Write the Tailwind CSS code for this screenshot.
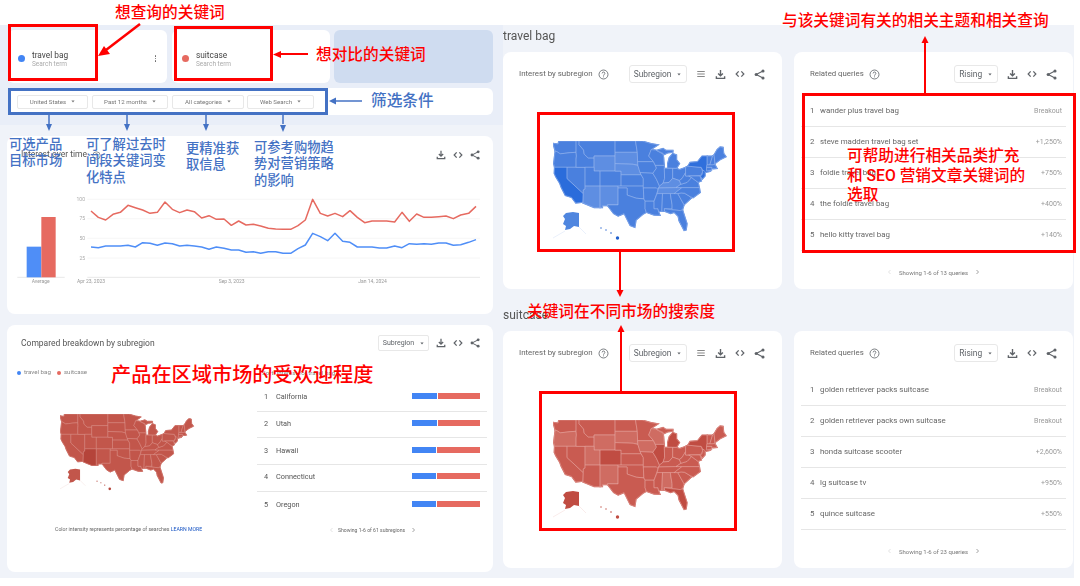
<!DOCTYPE html>
<html lang="zh-CN">
<head>
  <meta charset="UTF-8">
  <title>Google Trends 关键词对比</title>
  <script src="https://cdn.jsdelivr.net/npm/@tailwindcss/browser@4"></script>
</head>
<body class="bg-white font-['Roboto','Noto_Sans_CJK_SC',sans-serif]">

<!-- shared icons -->
<svg class="hidden">
  <symbol id="i-down" viewBox="0 0 12 12"><path d="M6 1v6M3.4 4.8 6 7.4l2.6-2.6M1.5 8v2.2h9V8" fill="none" stroke="currentColor" stroke-width="1.5"/></symbol>
  <symbol id="i-code" viewBox="0 0 12 12"><path d="M4.4 2.8 1.4 6l3 3.2M7.6 2.8l3 3.2-3 3.2" fill="none" stroke="currentColor" stroke-width="1.5"/></symbol>
  <symbol id="i-share" viewBox="0 0 12 12"><path d="M9.8 2.2 2.4 6l7.4 3.8" fill="none" stroke="currentColor" stroke-width="1.2"/><circle cx="9.8" cy="2.2" r="1.7" fill="currentColor"/><circle cx="2.4" cy="6" r="1.7" fill="currentColor"/><circle cx="9.8" cy="9.8" r="1.7" fill="currentColor"/></symbol>
  <symbol id="i-list" viewBox="0 0 12 12"><path d="M1.5 3h9M1.5 6h9M1.5 9h9" fill="none" stroke="currentColor" stroke-width="1.3"/></symbol>
  <symbol id="i-help" viewBox="0 0 12 12"><circle cx="6" cy="6" r="4.9" fill="none" stroke="currentColor" stroke-width=".9"/><path d="M4.5 4.8c0-2 3-2 3 0 0 1.200-1.500 1.200-1.500 2.500M6 8.100v1" fill="none" stroke="currentColor" stroke-width=".9"/></symbol>
  <symbol id="i-caret" viewBox="0 0 6 4"><path d="M.6.6h4.800L3 3.400z" fill="currentColor"/></symbol>
  <symbol id="i-left" viewBox="0 0 6 10"><path d="M5 1 1 5l4 4" fill="none" stroke="currentColor" stroke-width="1.100"/></symbol>
  <symbol id="i-right" viewBox="0 0 6 10"><path d="m1 1 4 4-4 4" fill="none" stroke="currentColor" stroke-width="1.100"/></symbol>
</svg>

<div class="relative w-[1080px] h-[586px] overflow-hidden bg-white">

  <!-- trends page -->
  <div class="mt-[25px] w-[1074px] h-[553px] bg-[#f0f3f9] flex blur-[0.45px] absolute top-0 left-0">

    <!-- left column -->
    <div class="w-[503px] shrink-0">
      <div class="h-[100px] bg-[#e9eef8] pt-[5px] pl-[8px]">
        <div class="flex h-[53px]">
          <div class="w-[159px] bg-white rounded-[6px] flex items-center pl-[10px] pr-[11px] pt-[4px]">
            <span class="w-[7px] h-[7px] rounded-full bg-[#4285f4]"></span>
            <div class="ml-[7px] flex-1">
              <div class="text-[8.300px] leading-[10px] text-[#444]">travel bag</div>
              <div class="text-[6.500px] leading-[8px] text-[#aaa]">Search term</div>
            </div>
            <span class="flex flex-col gap-[1px]">
              <i class="w-[1.500px] h-[1.500px] bg-[#666] rounded-full"></i><i class="w-[1.500px] h-[1.500px] bg-[#666] rounded-full"></i><i class="w-[1.500px] h-[1.500px] bg-[#666] rounded-full"></i>
            </span>
          </div>
          <div class="w-[158px] ml-[5px] bg-white rounded-[6px] flex items-center pl-[10px] pt-[4px]">
            <span class="w-[7px] h-[7px] rounded-full bg-[#e66a60]"></span>
            <div class="ml-[7px]">
              <div class="text-[8.300px] leading-[10px] text-[#444]">suitcase</div>
              <div class="text-[6.500px] leading-[8px] text-[#aaa]">Search term</div>
            </div>
          </div>
          <div class="w-[159px] ml-[4px] bg-[#cfdcf0] rounded-[6px]"></div>
        </div>
        <div class="mt-[5px] h-[27px] w-[485px] bg-white rounded-[6px] flex items-center pl-[9px] text-[6.100px] text-[#777]">
          <div class="w-[71px] h-[14px] border border-[#e8e8e8] rounded-[2px] flex items-center justify-center gap-[5px]">United States <svg class="w-[4px] h-[3px]"><use href="#i-caret"/></svg></div>
          <div class="w-[76px] h-[14px] ml-[4px] border border-[#e8e8e8] rounded-[2px] flex items-center justify-center gap-[5px]">Past 12 months <svg class="w-[4px] h-[3px]"><use href="#i-caret"/></svg></div>
          <div class="w-[72px] h-[14px] ml-[4px] border border-[#e8e8e8] rounded-[2px] flex items-center justify-center gap-[5px]">All categories <svg class="w-[4px] h-[3px]"><use href="#i-caret"/></svg></div>
          <div class="w-[67px] h-[14px] ml-[3px] border border-[#e8e8e8] rounded-[2px] flex items-center justify-center gap-[5px]">Web Search <svg class="w-[4px] h-[3px]"><use href="#i-caret"/></svg></div>
        </div>
      </div>

      <!-- interest over time -->
      <div class="ml-[7px] mt-[11px] w-[486px] h-[178px] bg-white rounded-[8px]">
        <div class="h-[37px] flex items-center pl-[14px] pr-[13px] text-[#5f6368]">
          <span class="text-[8.500px] text-[#555]">Interest over time</span>
          <svg class="w-[9px] h-[9px] ml-[5px] mt-[1px]"><use href="#i-help"/></svg>
          <span class="flex-1"></span>
          <svg class="w-[10px] h-[10px]"><use href="#i-down"/></svg>
          <svg class="w-[10px] h-[10px] ml-[7px]"><use href="#i-code"/></svg>
          <svg class="w-[10px] h-[10px] ml-[7px]"><use href="#i-share"/></svg>
        </div>
        <svg class="block mt-[3px] w-[486px] h-[138px]" viewBox="21 138 1458 414">
          <g stroke="#f1f1f1" stroke-width="2"><path d="M262 208H1440M262 266H1440M262 325H1440M262 384H1440"/></g>
          <path d="M262 442H1440M52 442H194" stroke="#dcdcdc" stroke-width="2"/>
          <rect x="80" y="350" width="44" height="92" fill="#4f8ef7"/>
          <rect x="124" y="261" width="43" height="181" fill="#e66a60"/>
          <g fill="#aaa" font-size="15" text-anchor="end">
            <text x="255" y="213">100</text><text x="255" y="271">75</text><text x="255" y="330">50</text><text x="255" y="389">25</text>
          </g>
          <g fill="#999" font-size="15">
            <text x="231" y="459">Apr 23, 2023</text><text x="656" y="459">Sep 3, 2023</text><text x="1075" y="459">Jan 14, 2024</text><text x="95" y="459">Average</text>
          </g>
          <polyline fill="none" stroke="#e66a60" stroke-width="4.500" stroke-linejoin="round" points="273,243 295,262 317,270 339,253 361,247 384,226 406,233 428,240 450,250 472,247 495,216 517,238 539,248 561,240 583,245 605,264 627,257 649,268 672,267 694,286 716,273 738,285 760,283 782,288 805,295 827,297 849,298 872,298 894,287 916,270 938,208 961,250 983,258 1005,250 1028,260 1050,242 1072,262 1094,278 1116,273 1138,273 1160,273 1184,276 1206,247 1228,274 1250,252 1272,262 1294,262 1316,260 1338,258 1360,266 1382,255 1406,250 1428,229"/>
          <polyline fill="none" stroke="#4f8ef7" stroke-width="4.500" stroke-linejoin="round" points="273,351 295,353 317,348 339,348 361,348 384,346 406,351 428,338 450,340 472,346 495,339 517,341 539,348 561,346 583,348 605,351 627,358 649,351 672,355 694,360 716,360 738,367 760,365 782,370 805,365 827,365 849,370 872,370 894,356 916,345 938,310 961,320 983,332 1005,310 1028,334 1050,337 1072,351 1094,351 1116,351 1138,354 1160,354 1184,348 1206,353 1228,341 1250,343 1272,341 1294,343 1316,339 1338,339 1360,346 1382,344 1406,337 1428,329"/>
        </svg>
      </div>

      <!-- compared breakdown -->
      <div class="ml-[7px] mt-[11px] w-[486px] h-[247px] bg-white rounded-[8px] pt-[10px]">
        <div class="h-[16px] flex items-center pl-[14px] pr-[13px] text-[#5f6368]">
          <span class="text-[8.500px] text-[#555]">Compared breakdown by subregion</span>
          <span class="flex-1"></span>
          <div class="w-[51px] h-[16px] border border-[#e8e8e8] rounded-[2px] flex items-center justify-center gap-[6px] text-[7px]">Subregion <svg class="w-[4px] h-[3px]"><use href="#i-caret"/></svg></div>
          <svg class="w-[10px] h-[10px] ml-[7px]"><use href="#i-down"/></svg>
          <svg class="w-[10px] h-[10px] ml-[7px]"><use href="#i-code"/></svg>
          <svg class="w-[10px] h-[10px] ml-[7px]"><use href="#i-share"/></svg>
        </div>
        <div class="flex mt-[18px]">
          <div class="w-[250px]">
            <div class="h-[8px] pl-[10px] flex items-center text-[6.200px] text-[#888]">
              <span class="w-[4px] h-[4px] rounded-full bg-[#4285f4]"></span><span class="ml-[3px]">travel bag</span>
              <span class="w-[4px] h-[4px] rounded-full bg-[#e66a60] ml-[6px]"></span><span class="ml-[3px]">suitcase</span>
            </div>
            <svg id="map-compare" class="block ml-[53px] mt-[37px] w-[135px] h-[78px]" viewBox="0 0 175 101"></svg>
            <div class="mt-[33px] pl-[48px] h-[8px] text-[5.200px] leading-[8px] text-[#666] whitespace-nowrap">Color intensity represents percentage of searches <span class="text-[#1a56c4]">LEARN MORE</span></div>
          </div>
          <div class="w-[230px]">
            <div class="h-[8px] pl-[5px] text-[6.200px] leading-[8px] text-[#888]">Sort: Interest for travel bag</div>
            <div id="compare-rows" class="mt-[8px]"></div>
            <div class="mt-[7px] h-[10px] flex items-center pl-[73px] text-[5.100px] text-[#666]">
              <svg class="w-[3px] h-[6px] text-[#ccc]"><use href="#i-left"/></svg>
              <span class="ml-[5px]">Showing 1-6 of 61 subregions</span>
              <svg class="w-[3px] h-[6px] ml-[7px] text-[#555]"><use href="#i-right"/></svg>
            </div>
          </div>
        </div>
      </div>
    </div>

    <!-- right column -->
    <div class="w-[570px] grid grid-cols-[279px_279px] gap-x-[12px] content-start">
      <div class="col-span-2 h-[27px] flex items-end pb-[9px] text-[12px] leading-[14px] text-[#555]">travel bag</div>
      <div class="h-[237px] bg-white rounded-[8px]" data-region="map-blue"></div>
      <div class="h-[237px] bg-white rounded-[8px]" data-related="top"></div>
      <div class="col-span-2 h-[42px] flex items-end pb-[9px] text-[12px] leading-[14px] text-[#555]">suitcase</div>
      <div class="h-[237px] bg-white rounded-[8px]" data-region="map-red"></div>
      <div class="h-[237px] bg-white rounded-[8px]" data-related="bottom"></div>
    </div>
  </div>

  <!-- annotation frames and arrows -->
  <div class="absolute left-[8px] top-[24px] w-[90px] h-[57px] border-[3px] border-[#ff0000]"></div>
  <div class="absolute left-[174px] top-[26px] w-[99px] h-[55px] border-[3px] border-[#ff0000]"></div>
  <div class="absolute left-[8px] top-[88px] w-[320px] h-[27px] border-[3px] border-[#4472c4]"></div>
  <div class="absolute left-[537px] top-[112px] w-[198px] h-[140px] border-[3px] border-[#ff0000]"></div>
  <div class="absolute left-[539px] top-[391px] w-[198px] h-[140px] border-[3px] border-[#ff0000]"></div>
  <div class="absolute left-[802px] top-[93px] w-[274px] h-[160px] border-[3px] border-[#ff0000]"></div>

  <svg class="absolute left-0 top-0 w-[1080px] h-[586px]" viewBox="0 0 1080 586">
    <g stroke="#ff0000" stroke-width="2" fill="none">
      <path d="M140 24 106 50" stroke-width="2.500"/><path d="M308 54H280"/><path d="M620 252v38"/><path d="M621 391v-60"/><path d="M925 93V42"/>
    </g>
    <g fill="#ff0000">
      <path d="M98 56l12-2-6-8z"/><path d="M273 54.500l8-3.500v7z"/><path d="M620 297l-3.500-7h7z"/><path d="M621 325l-3.500 7h7z"/><path d="M925 36l-3.500 7h7z"/>
    </g>
    <g stroke="#4472c4" stroke-width="1.500" fill="none">
      <path d="M362 101H335"/><path d="M49 115v9"/><path d="M127 115v9"/><path d="M206 115v9"/><path d="M283 115v9"/>
    </g>
    <g fill="#4472c4">
      <path d="M329 101l7-3.500v7z"/><path d="M49 131l-3-7h6z"/><path d="M127 131l-3-7h6z"/><path d="M206 131l-3-7h6z"/><path d="M283 132l-3-7h6z"/>
    </g>
  </svg>

  <!-- annotation texts -->
  <div class="absolute left-[115px] top-[3px] text-[15.700px] leading-[20px] text-[#ff0000] font-medium whitespace-nowrap">想查询的关键词</div>
  <div class="absolute left-[316px] top-[45px] text-[15.700px] leading-[20px] text-[#ff0000] font-medium whitespace-nowrap">想对比的关键词</div>
  <div class="absolute left-[782px] top-[11px] text-[15.700px] leading-[20px] text-[#ff0000] font-medium whitespace-nowrap">与该关键词有关的相关主题和相关查询</div>
  <div class="absolute left-[527px] top-[302px] text-[15.700px] leading-[20px] text-[#ff0000] font-medium whitespace-nowrap">关键词在不同市场的搜索度</div>
  <div class="absolute left-[111px] top-[362px] text-[20.200px] leading-[26px] text-[#ff0000] font-medium whitespace-nowrap">产品在区域市场的受欢迎程度</div>
  <div class="absolute left-[847px] top-[146px] text-[15.700px] leading-[19.500px] text-[#ff0000] font-medium whitespace-nowrap">可帮助进行相关品类扩充<br>和 SEO 营销文章关键词的<br>选取</div>
  <div class="absolute left-[371px] top-[91px] text-[15.700px] leading-[20px] text-[#4472c4] font-medium whitespace-nowrap">筛选条件</div>
  <div class="absolute left-[9px] top-[137px] text-[13.300px] leading-[16.300px] text-[#4472c4] font-medium whitespace-nowrap">可选产品<br>目标市场</div>
  <div class="absolute left-[86px] top-[137px] text-[13.300px] leading-[16.300px] text-[#4472c4] font-medium whitespace-nowrap">可了解过去时<br>间段关键词变<br>化特点</div>
  <div class="absolute left-[186px] top-[141px] text-[13.300px] leading-[16.300px] text-[#4472c4] font-medium whitespace-nowrap">更精准获<br>取信息</div>
  <div class="absolute left-[254px] top-[140px] text-[13.300px] leading-[16.300px] text-[#4472c4] font-medium whitespace-nowrap">可参考购物趋<br>势对营销策略<br>的影响</div>
</div>

<script>
  // state outlines as lon/lat, flat projection like the flat top border of the picture
  const states = {
    WA: [-124.7,48.4,-123,48.2,-122.8,49,-117,49,-117,46,-119,45.9,-121,45.7,-122.3,45.6,-123.5,46.2,-124,46.3],
    OR: [-124,46.3,-123.5,46.2,-122.3,45.6,-121,45.7,-119,45.9,-117,46,-116.9,45,-117,44.2,-117,42,-124.2,42,-124.5,43],
    CA: [-124.2,42,-120,42,-120,39,-114.6,35,-114.7,32.7,-117.1,32.5,-118.5,34,-120.6,34.5,-122,36.7,-122.5,37.8,-123.8,39.5,-124.3,40.4],
    NV: [-120,42,-114,42,-114,36.2,-114.6,36,-114.6,35,-120,39],
    ID: [-117,49,-116,49,-116,48,-114.5,46.6,-114.3,45.5,-113,44.5,-111,44.5,-111,42,-117,42,-117,44.2,-116.9,45,-117,46],
    MT: [-116,49,-104,49,-104,45,-111,45,-111,44.5,-113,44.5,-114.3,45.5,-114.5,46.6,-116,48],
    WY: [-111,45,-104,45,-104,41,-111,41],
    UT: [-114,42,-111,42,-111,41,-109,41,-109,37,-114,37],
    CO: [-109,41,-102,41,-102,37,-109,37],
    AZ: [-114,37,-109,37,-109,31.3,-111,31.3,-114.8,32.5,-114.7,32.7,-114.6,35,-114.6,36,-114,36.2],
    NM: [-109,37,-103,37,-103,32,-106.6,32,-106.5,31.8,-108.2,31.8,-108.2,31.3,-109,31.3],
    ND: [-104,49,-97.2,49,-96.6,46,-104,46],
    SD: [-104,46,-96.6,46,-96.5,43.5,-96.4,42.5,-98,42.8,-104,43],
    NE: [-104,43,-98,42.8,-96.4,42.5,-95.3,40,-102,40,-102,41,-104,41],
    KS: [-102,40,-95.3,40,-94.6,39,-94.6,37,-102,37],
    OK: [-103,37,-94.6,37,-94.4,33.6,-97,33.8,-100,34.6,-100,36.5,-103,36.5],
    TX: [-103,36.5,-100,36.5,-100,34.6,-97,33.8,-94.4,33.6,-94,33,-94,31,-93.6,30,-94.7,29.5,-97,28,-97.4,26,-99,26.5,-101,29.7,-103,29,-104.5,29.7,-106.5,31.8,-106.6,32,-103,32],
    MN: [-97.2,49,-95,49,-92,48.3,-89.6,48,-92,46.7,-92.3,46,-92.8,45,-91.2,43.5,-96.5,43.5,-96.6,46],
    IA: [-96.5,43.5,-91.2,43.5,-90.2,41.8,-91.4,40.4,-95.7,40.6,-96.4,42.5],
    MO: [-95.7,40.6,-91.4,40.4,-90.2,38.8,-89.2,37,-89.7,36,-90.4,36.5,-94.6,36.5,-94.6,39,-95.3,40],
    AR: [-94.6,36.5,-90,36.5,-89.7,36,-91,33,-94,33,-94.4,33.6],
    LA: [-94,33,-91,33,-91,31,-89.7,31,-89.5,30.2,-89,29.2,-91,29.3,-93.6,30,-94,31],
    WI: [-92,46.7,-90.5,46.6,-88,45.5,-87.8,44.5,-87.6,42.5,-90.6,42.5,-91.2,43.5,-92.8,45,-92.3,46],
    IL: [-90.6,42.5,-87.6,42.5,-87.5,39,-88,37.8,-89.2,37,-90.2,38.8,-91.4,40.4,-90.2,41.8],
    MI: [-86.5,41.8,-83.5,41.7,-82.5,43,-83.5,44,-83.5,45.3,-84.8,45.7,-86,44.5,-86.5,43],
    MIU: [-90.2,46.5,-88,47,-87,46.5,-84.7,46.5,-84.7,46,-86.5,45.8,-87.8,45.3,-88,45.7],
    IN: [-87.6,41.7,-84.8,41.7,-84.8,39.1,-86,38,-88,37.8,-87.5,39],
    OH: [-84.8,41.7,-83.5,41.7,-82.5,41.4,-80.5,42,-80.5,40.6,-81.7,39,-82.6,38.5,-84.8,39.1],
    KY: [-89.5,36.5,-83.7,36.6,-82,37.5,-82.6,38.5,-84.8,39.1,-86,38,-88,37.8,-89.2,37],
    TN: [-90,35,-84.3,35,-81.7,36.6,-83.7,36.6,-89.5,36.5],
    MS: [-91,33,-90,35,-88.2,35,-88.4,30.3,-89.5,30.2,-89.7,31,-91,31],
    AL: [-88.2,35,-85.6,35,-85,32,-85,31,-87.6,31,-87.5,30.3,-88.4,30.3],
    GA: [-85.6,35,-83.1,35,-81,32,-81.5,30.7,-82.2,30.5,-85,30.7,-85,32],
    FL: [-87.6,31,-85,30.7,-82.2,30.5,-81.5,30.7,-80,27,-80.3,25.3,-81,25.2,-82.7,27.8,-83,29,-84.3,30,-85.5,29.7,-87.5,30.3],
    SC: [-83.1,35,-82,35.2,-80.8,35.1,-79,34.2,-78.6,33.8,-81,32],
    NC: [-84.3,35,-83.1,35,-82,35.2,-80.8,35.1,-79,34.2,-78,33.9,-75.6,35.3,-75.9,36.6,-81.7,36.6],
    VA: [-83.7,36.6,-75.9,36.6,-76.3,38,-77.2,38.5,-78.5,39.3,-80,38,-82,37.5],
    WV: [-82,37.5,-80,38,-78.5,39.3,-79.5,39.7,-80.5,39.7,-80.5,40.6,-81.7,39,-82.6,38.5],
    PA: [-80.5,42,-79.8,42.3,-75.3,42,-74.8,40.8,-75.5,39.8,-80.5,39.7],
    NY: [-79.8,42.3,-79,43.3,-76.5,43.5,-75,45,-73.3,45,-73.3,42.7,-73.5,41.2,-72,41,-74,40.6,-74.8,41.3,-75.3,42],
    MD: [-79.5,39.7,-75.7,39.7,-75.2,38.4,-76.3,38,-77.2,38.5,-78.5,39.3],
    NJ: [-74.8,41.3,-74,40.9,-74,39.7,-74.9,38.9,-75.5,39.6,-74.8,40.3],
    CT: [-73.5,42,-71.8,42,-71.8,41.3,-73.6,41],
    MA: [-73.4,42.7,-71.3,42.7,-70.7,42.7,-70,41.7,-71.3,41.6,-71.8,42,-73.5,42],
    VT: [-73.3,45,-71.5,45,-72.4,42.7,-73.3,42.7],
    NH: [-71.5,45,-71,45.3,-70.7,43,-71.3,42.7,-72.4,42.7],
    ME: [-71,45.3,-70,46.7,-69,47.4,-68,47.3,-67.8,45.7,-67,44.8,-69,44,-70.7,43]
  };
  const alaska = "13,72 20,71 26,72 26,86 21,85 17,88 12,89 13,85 10,83 12,78 10,75";
  const hawaii = [[48,87,.7],[53,89,.7],[58,92,.8],[64.5,97,1.7]];

  function drawMap(id, base, shades, stroke) {
    let fills = "", lines = "";
    for (const name in states) {
      const p = states[name];
      let pts = "";
      for (let i = 0; i < p.length; i += 2) {
        pts += ((p[i] + 124.7) * 3).toFixed(1) + "," + ((49 - p[i + 1]) * 3.76).toFixed(1) + " ";
      }
      // first pass closes the small gaps left by the rough outlines
      fills += `<polygon points="${pts}" fill="${base}" stroke="${base}" stroke-width="1.200"/>`;
      lines += `<polygon points="${pts}" fill="${shades[name] || base}" stroke="${stroke}" stroke-width=".45"/>`;
    }
    let out = fills + lines;
    out += `<polygon points="${alaska}" fill="${shades.AK || base}"/>`;
    out += `<path d="M26 86 33 93M12 90 0 97" fill="none" stroke="${base}" stroke-width=".6" opacity=".2"/>`;
    hawaii.forEach(h => { out += `<circle cx="${h[0]}" cy="${h[1]}" r="${h[2]}" fill="${shades.HI || base}"/>`; });
    document.getElementById(id).innerHTML = out;
  }

  // region cards
  const regionCard = id => `
    <div class="pt-[13px] h-[31px] flex items-center pl-[16px] text-[#5f6368]">
      <span class="text-[7.900px] text-[#666]">Interest by subregion</span>
      <svg class="w-[11px] h-[11px] ml-[5px]"><use href="#i-help"/></svg>
      <div class="w-[58px] h-[18px] ml-[20px] border border-[#e8e8e8] rounded-[3px] flex items-center justify-center gap-[6px] text-[8.400px]">Subregion <svg class="w-[4px] h-[3px]"><use href="#i-caret"/></svg></div>
      <svg class="w-[10px] h-[10px] ml-[9px] text-[#888]"><use href="#i-list"/></svg>
      <svg class="w-[11px] h-[11px] ml-[9px]"><use href="#i-down"/></svg>
      <svg class="w-[10px] h-[10px] ml-[9px]"><use href="#i-code"/></svg>
      <svg class="w-[11px] h-[11px] ml-[9px]"><use href="#i-share"/></svg>
    </div>
    <svg id="${id}" class="block ml-[50px] mt-[58px] w-[175px] h-[101px]" viewBox="0 0 175 101"></svg>`;
  document.querySelectorAll("[data-region]").forEach(el => { el.innerHTML = regionCard(el.dataset.region); });

  // related queries
  const related = {
    top: { foot: "Showing 1-6 of 13 queries", rows: [
      ["wander plus travel bag", "Breakout"], ["steve madden travel bag set", "+1,250%"], ["foldie travel bag", "+750%"],
      ["the foldie travel bag", "+400%"], ["hello kitty travel bag", "+140%"]] },
    bottom: { foot: "Showing 1-6 of 23 queries", rows: [
      ["golden retriever packs suitcase", "Breakout"], ["golden retriever packs own suitcase", "Breakout"], ["honda suitcase scooter", "+2,600%"],
      ["lg suitcase tv", "+950%"], ["quince suitcase", "+550%"]] }
  };
  document.querySelectorAll("[data-related]").forEach(el => {
    const d = related[el.dataset.related];
    const rows = d.rows.map((r, i) => `
      <div class="h-[31px] mx-[7px] flex items-center pl-[9px] pr-[4px] border-b border-[#e6e6e6] text-[7.900px] text-[#666]">
        <span class="w-[10px]">${i + 1}</span><span class="flex-1">${r[0]}</span><span class="text-[7px] text-[#999]">${r[1]}</span>
      </div>`).join("");
    el.innerHTML = `
      <div class="pt-[13px] h-[31px] flex items-center pl-[16px] text-[#5f6368]">
        <span class="text-[7.800px] text-[#666]">Related queries</span>
        <svg class="w-[11px] h-[11px] ml-[5px]"><use href="#i-help"/></svg>
        <div class="w-[44px] h-[18px] ml-[74px] border border-[#e8e8e8] rounded-[3px] flex items-center justify-center gap-[6px] text-[8.400px]">Rising <svg class="w-[4px] h-[3px]"><use href="#i-caret"/></svg></div>
        <svg class="w-[11px] h-[11px] ml-[9px]"><use href="#i-down"/></svg>
        <svg class="w-[10px] h-[10px] ml-[9px]"><use href="#i-code"/></svg>
        <svg class="w-[11px] h-[11px] ml-[9px]"><use href="#i-share"/></svg>
      </div>
      <div class="mt-[13px]">${rows}</div>
      <div class="h-[10px] mt-[16px] flex items-center justify-center gap-[8px] text-[6px] text-[#777]">
        <svg class="w-[3px] h-[6px] text-[#ccc]"><use href="#i-left"/></svg>
        <span>${d.foot}</span>
        <svg class="w-[3px] h-[6px] text-[#555]"><use href="#i-right"/></svg>
      </div>`;
  });

  // compared breakdown rows
  const compare = [["California", 25], ["Utah", 25], ["Hawaii", 24], ["Connecticut", 24], ["Oregon", 24]];
  document.getElementById("compare-rows").innerHTML = compare.map((r, i) => `
    <div class="h-[26.700px] flex items-center pl-[7px] pr-[8px] ${i < 4 ? "border-b border-[#e6e6e6]" : ""} text-[7.300px] text-[#555]">
      <span class="w-[12px]">${i + 1}</span><span class="flex-1">${r[0]}</span>
      <span class="flex w-[68px] h-[6px] gap-[1px] mb-[3px] mr-[-1px]"><i class="bg-[#4285f4] h-full" style="width:${r[1]}px"></i><i class="bg-[#e66a60] h-full flex-1"></i></span>
    </div>`).join("");

  // maps
  const lightBlue = "#5e8ee2", lightRed = "#cf6c62", deepRed = "#c04c42";
  const blueShades = { CA: "#2a6cdb", NY: "#2f6fdc", NJ: "#2f6fdc", HI: "#1f5fcc", AK: "#4f86df", WY: lightBlue, SD: lightBlue, NE: lightBlue, AZ: lightBlue, NM: lightBlue, TN: lightBlue, KY: lightBlue };
  const redShades = { CO: deepRed, NY: deepRed, IL: deepRed, MI: deepRed, FL: deepRed, AK: deepRed, HI: deepRed, WY: lightRed, NM: lightRed, OR: lightRed, UT: lightRed, AL: lightRed, IA: lightRed, SD: lightRed, WI: lightRed };
  drawMap("map-blue", "#4a80de", blueShades, "#a9c3f1");
  drawMap("map-red", "#c95b51", redShades, "#eab4ae");
  drawMap("map-compare", "#c2564b", { AZ: "#b5443a", HI: "#b5443a" }, "#e6a9a3");
</script>
</body>
</html>
